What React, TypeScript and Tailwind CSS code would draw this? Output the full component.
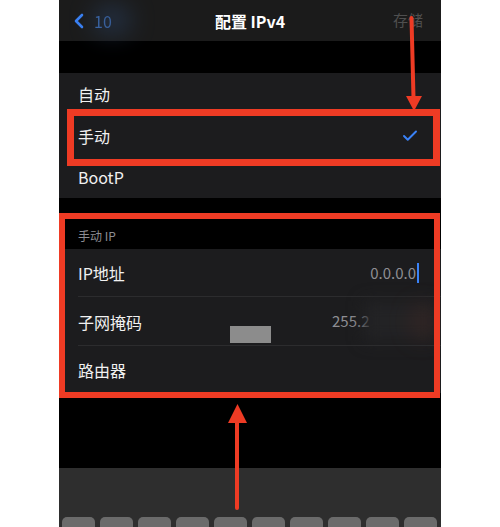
import { Check, ChevronLeft } from "lucide-react";

const font = { fontFamily: '"Noto Sans CJK SC", "Noto Sans", sans-serif' };

function Row({
  label,
  value,
  height,
  divider = true,
  children,
}: {
  label: string;
  value?: React.ReactNode;
  height: string;
  divider?: boolean;
  children?: React.ReactNode;
}) {
  return (
    <div className={`relative flex items-center pl-[19px] pr-[22px] ${height}`}>
      <span className="text-[16px] leading-none text-[#f1f1f1]">{label}</span>
      <div className="ml-auto flex items-center">{value}</div>
      {children}
      {divider && <div className="absolute bottom-0 left-[19px] right-0 h-px bg-[#2c2c2e]" />}
    </div>
  );
}

function Annotations() {
  return (
    <svg className="pointer-events-none absolute inset-0" width="382" height="527" viewBox="0 0 382 527">
      {/* arrow down to the checked row */}
      <path d="M352.5 18 L354.5 98" stroke="#ee3b24" strokeWidth="4" strokeLinecap="round" />
      <path d="M347 96 L363 96 L355 111 Z" fill="#ee3b24" />
      {/* arrow up to the manual IP group */}
      <path d="M178 508 L178 420" stroke="#ee3b24" strokeWidth="4" strokeLinecap="round" />
      <path d="M169 423 L188 423 L178.5 404 Z" fill="#ee3b24" />
    </svg>
  );
}

export default function App() {
  return (
    <div className="h-[527px] w-[500px] overflow-hidden bg-white" style={font}>
      <div className="relative mx-auto flex h-full w-[382px] flex-col overflow-hidden bg-black">
        {/* nav bar */}
        <div className="relative flex h-[41px] shrink-0 items-center bg-[#1b1b1b]">
          <div className="flex items-center pl-[8px] text-[#3a82f7]">
            <ChevronLeft size={24} strokeWidth={2.6} />
            <span className="ml-[3px] text-[16px] text-[#3f6fb8] blur-[0.6px]">10</span>
          </div>
          <div className="absolute left-[34px] top-[6px] h-[28px] w-[38px] rounded-full bg-[#2a4060] opacity-60 blur-md" />
          <span className="absolute left-1/2 -translate-x-1/2 text-[16px] font-semibold text-white">配置 IPv4</span>
          <span className="absolute right-[18px] text-[15px] text-[#4f4f4f]">存储</span>
        </div>

        <div className="h-[32px] shrink-0" />

        {/* method list */}
        <div className="shrink-0 bg-[#1c1c1e]">
          <Row label="自动" height="h-[42px]" divider={false} />
          <Row
            label="手动"
            height="h-[41px]"
            divider={false}
            value={<Check size={18} strokeWidth={2.6} className="text-[#3a82f7]" />}
          />
          <Row label="BootP" height="h-[42px]" divider={false} />
        </div>

        {/* manual ip group */}
        <div className="flex h-[51px] shrink-0 items-end pb-[7px] pl-[19px]">
          <span className="text-[12px] leading-none text-[#8d8d93]">手动 IP</span>
        </div>
        <div className="shrink-0 bg-[#1c1c1e]">
          <Row
            label="IP地址"
            height="h-[48px]"
            value={
              <div className="flex items-center">
                <span className="text-[15px] text-[#8e8e93]">0.0.0.0</span>
                <span className="ml-px h-[20px] w-[2px] bg-[#3a82f7]" />
              </div>
            }
          />
          <Row label="子网掩码" height="h-[49px]">
            <span className="absolute left-[273px] text-[15px] text-[#8e8e93]">255.2</span>
            <div className="absolute left-[305px] top-[4px] h-[40px] w-[72px] bg-[#232325] blur-sm" />
            <div className="absolute left-[356px] top-[10px] h-[30px] w-[16px] rounded-full bg-[#5a2a20] opacity-50 blur-md" />
            <div className="absolute left-[171px] top-[29px] h-[17px] w-[41px] bg-[#8c8c8c]" />
          </Row>
          <Row label="路由器" height="h-[47px]" divider={false} />
        </div>

        <div className="flex-1" />

        {/* keyboard */}
        <div className="flex h-[59px] shrink-0 flex-col bg-[#2e2e2e]">
          <div className="mt-auto flex gap-[5px] pl-[3px]">
            {Array.from({ length: 10 }).map((_, i) => (
              <div key={i} className="h-[10px] w-[33px] rounded-t-[5px] bg-[#6b6b6b]" />
            ))}
          </div>
        </div>

        {/* highlight boxes */}
        <div className="absolute left-[8px] top-[109px] h-[57px] w-[373px] border-[7px] border-[#ee3b24]" />
        <div className="absolute left-0 top-[213px] h-[185px] w-[381px] border-[6px] border-[#ee3b24]" />
        <Annotations />
      </div>
    </div>
  );
}
